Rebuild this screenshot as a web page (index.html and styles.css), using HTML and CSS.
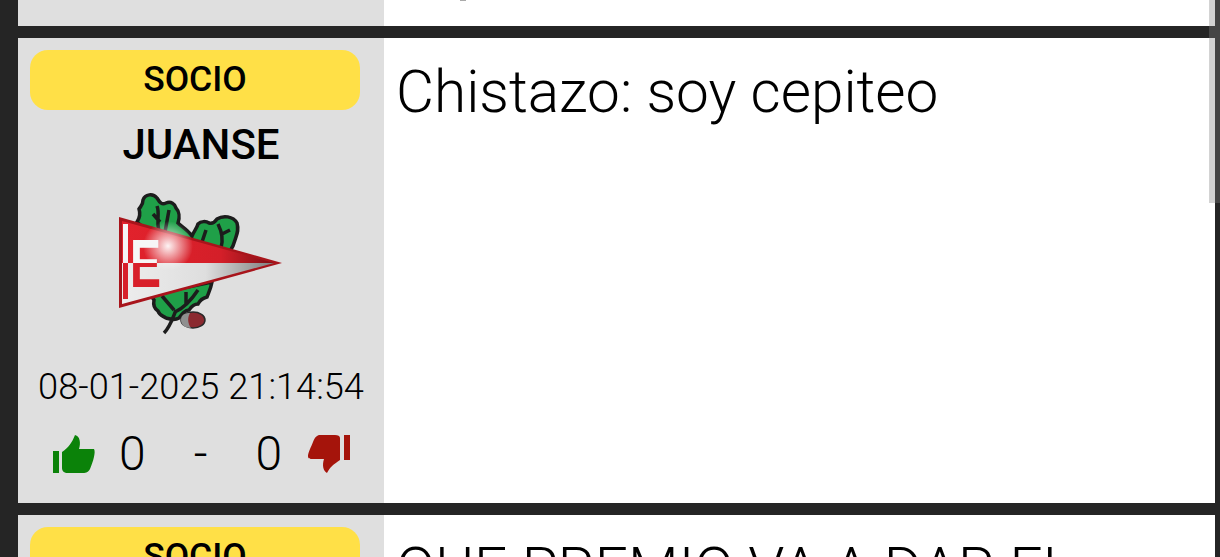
FILE: index.html
```html
<!DOCTYPE html>
<html lang="en">
<head>
    <meta charset="UTF-8">
    <meta name="viewport" content="width=device-width, initial-scale=1.0">
    <title>Foro</title>
    <link rel="stylesheet" href="styles.css">
</head>
<body>
    <div class="scroll-thumb"></div>
    <div class="feed">
        <div class="post post-cut-top">
            <div class="side"></div>
            <div class="body">
                <div class="cut-text"></div>
            </div>
        </div>

        <div class="post">
            <div class="side">
                <div class="badge">SOCIO</div>
                <div class="name">JUANSE</div>
                <svg class="crest" viewBox="0 0 200 160" width="200" height="160">
                    <defs>
                        <linearGradient id="flag-red" x1="0" y1="0" x2="1" y2="0">
                            <stop offset="0" stop-color="#e2222c"/>
                            <stop offset="0.65" stop-color="#d41f29"/>
                            <stop offset="1" stop-color="#7e0e14"/>
                        </linearGradient>
                        <linearGradient id="flag-white" x1="0" y1="0" x2="1" y2="0">
                            <stop offset="0" stop-color="#ededed"/>
                            <stop offset="0.55" stop-color="#dedede"/>
                            <stop offset="1" stop-color="#7d7d7d"/>
                        </linearGradient>
                        <radialGradient id="flag-shine">
                            <stop offset="0" stop-color="#fff" stop-opacity="0.95"/>
                            <stop offset="1" stop-color="#fff" stop-opacity="0"/>
                        </radialGradient>
                        <clipPath id="upper-half"><rect x="0" y="0" width="200" height="83"/></clipPath>
                        <clipPath id="lower-half"><rect x="0" y="83" width="200" height="77"/></clipPath>
                    </defs>
                    <!-- oak leaves -->
                    <path class="leaf" d="M37 42 C41 36 40 32 39 29 C41 26 43 25 43 20 C45 14 53 13 57 18 C60 23 62 25 66 23 C71 21 75 24 76 28 C79 31 80 37 78 43 C81 46 88 50 92 56 C94 51 97 48 98 44 C101 41 106 41 109 43 C112 44 115 42 117 39 C123 35 133 36 137 43 C139 50 137 54 135 60 C134 64 133 67 130 71 L60 62 Z"/>
                    <path class="leaf" d="M112 102 C111 108 109 112 107 117 C103 118 100 120 98 124 C94 124 91 127 89 130 C85 130 82 134 79 138 C74 141 70 139 66 138 C63 136 59 135 58 131 C55 129 53 125 54 120 C52 118 52 116 54 114 Z"/>
                    <path class="vein" d="M57 26 C60 34 56 40 59 52 M69 30 L65 52 M60 42 L53 34 M106 50 L102 62 M118 44 C121 50 124 58 121 68 M122 54 L130 50"/>
                    <path class="vein" d="M64 153 C70 147 72 140 76 130 M75 132 C84 128 90 122 98 110 M62 116 L74 130 M86 124 L86 112"/>
                    <!-- acorn -->
                    <ellipse cx="93" cy="140" rx="12" ry="8" fill="#8b2a30" stroke="#2a2a2a" stroke-width="1.5"/>
                    <path d="M81 140 C81 134 86 133 90 133 C87 138 88 144 91 148 C85 148 81 145 81 140 Z" fill="#8f8f8f"/>
                    <!-- pennant -->
                    <path d="M19 37 L182 83 L19 128 Z" fill="#a8141b"/>
                    <path d="M22 41 L174 83 L22 83 Z" fill="url(#flag-red)"/>
                    <path d="M22 83 L174 83 L22 124 Z" fill="url(#flag-white)"/>
                    <circle cx="68" cy="66" r="25" fill="url(#flag-shine)"/>
                    <rect x="23" y="44" width="5" height="39" fill="#f4f4f4"/>
                    <rect x="23" y="83" width="5" height="36" fill="#d8202a"/>
                    <text class="crest-letter crest-letter-top" x="30" y="107" textLength="31" lengthAdjust="spacingAndGlyphs" clip-path="url(#upper-half)">E</text>
                    <text class="crest-letter crest-letter-bottom" x="30" y="107" textLength="31" lengthAdjust="spacingAndGlyphs" clip-path="url(#lower-half)">E</text>
                </svg>
                <div class="date">08-01-2025 21:14:54</div>
                <div class="votes">
                    <svg class="thumb thumb-up" viewBox="0 0 44 40" width="44" height="40">
                        <path fill="#0b8209" d="M1 17 H7 V39 H1 Z M10 18 C16 14 20 9 23 1 C28 2 29 9 27 15 H42 C44 18 41 28 38 35 C36 39 33 39 30 39 H16 C12 39 10 37 10 34 Z"/>
                    </svg>
                    <span class="count">0</span>
                    <span class="dash">-</span>
                    <span class="count">0</span>
                    <svg class="thumb thumb-down" viewBox="0 0 44 40" width="44" height="40">
                        <path fill="#a5140b" d="M43 1 H37 V26 H43 Z M33 4 C33 2 31 1 28 1 H13 C10 1 8 3 6 8 C4 13 1 19 1 22 C1 25 3 25 6 25 H17 C15 31 16 37 20 39 C23 33 27 30 33 26 Z"/>
                    </svg>
                </div>
            </div>
            <div class="body">
                <p class="message">Chistazo: soy cepiteo</p>
            </div>
        </div>

        <div class="post">
            <div class="side">
                <div class="badge">SOCIO</div>
            </div>
            <div class="body">
                <p class="message">QUE PREMIO VA A DAR EL</p>
            </div>
        </div>
    </div>
</body>
</html>
```

FILE: styles.css
```css
html, body {
    height: 100%;
    margin: 0;
    overflow: hidden;
}
body {
    font-family: Roboto, "Liberation Sans", sans-serif;
    background-color: #252525;
    color: #000;
}
.feed {
    padding: 0 5px 0 18px;
    display: flex;
    flex-direction: column;
    gap: 12px;
}
.post {
    display: flex;
    min-height: 465px;
    flex-shrink: 0;
}
.post-cut-top {
    min-height: 26px;
}
.post-cut-top .body,
.post-cut-top .side {
    padding: 0;
}
/* tail of the letter scrolled off above the fold */
.cut-text {
    width: 6px;
    height: 1px;
    margin-left: 76px;
    background-color: #aaa;
}
.side {
    width: 366px;
    flex-shrink: 0;
    box-sizing: border-box;
    padding: 12px;
    background-color: #dfdfdf;
    text-align: center;
}
.body {
    flex: 1;
    background-color: #fff;
    padding: 16px 12px;
}
.message {
    margin: 0;
    font-size: 58.5px;
    font-weight: 300;
    line-height: 76px;
    white-space: nowrap;
}
.badge {
    height: 60px;
    width: 330px;
    line-height: 58px;
    border-radius: 18px;
    background-color: #ffe047;
    font-size: 35.5px;
    font-weight: 500;
}
.name {
    margin-top: 10px;
    font-size: 42px;
    font-weight: 500;
    line-height: 50px;
}
.crest {
    display: block;
    margin: 10px 0 0 70px;
    filter: blur(0.5px);
}
.crest-letter {
    font-family: "Liberation Sans", sans-serif;
    font-size: 68px;
    font-weight: 700;
}
.crest-letter-top {
    fill: #f6f6f6;
}
.crest-letter-bottom {
    fill: #d8202a;
}
.leaf {
    fill: #1fa048;
    stroke: #1c1c1c;
    stroke-width: 3.5;
}
.vein {
    fill: none;
    stroke: #1c1c1c;
    stroke-width: 3.5;
}
.date {
    margin-top: 25px;
    font-size: 36.2px;
    font-weight: 300;
    line-height: 44px;
    white-space: nowrap;
}
.votes {
    display: flex;
    align-items: center;
    gap: 22px;
    margin-top: 21px;
    padding-left: 22px;
    font-size: 48px;
    font-weight: 300;
    line-height: 48px;
}
.dash {
    margin: 0 26px;
}
.thumb {
    display: block;
}
.thumb-up {
    margin-right: 1px;
}
.thumb-down {
    margin-left: 3px;
}
.scroll-thumb {
    position: absolute;
    top: 0;
    right: 0;
    width: 11px;
    height: 203px;
    background-color: rgba(128, 128, 128, 0.35);
}
```
